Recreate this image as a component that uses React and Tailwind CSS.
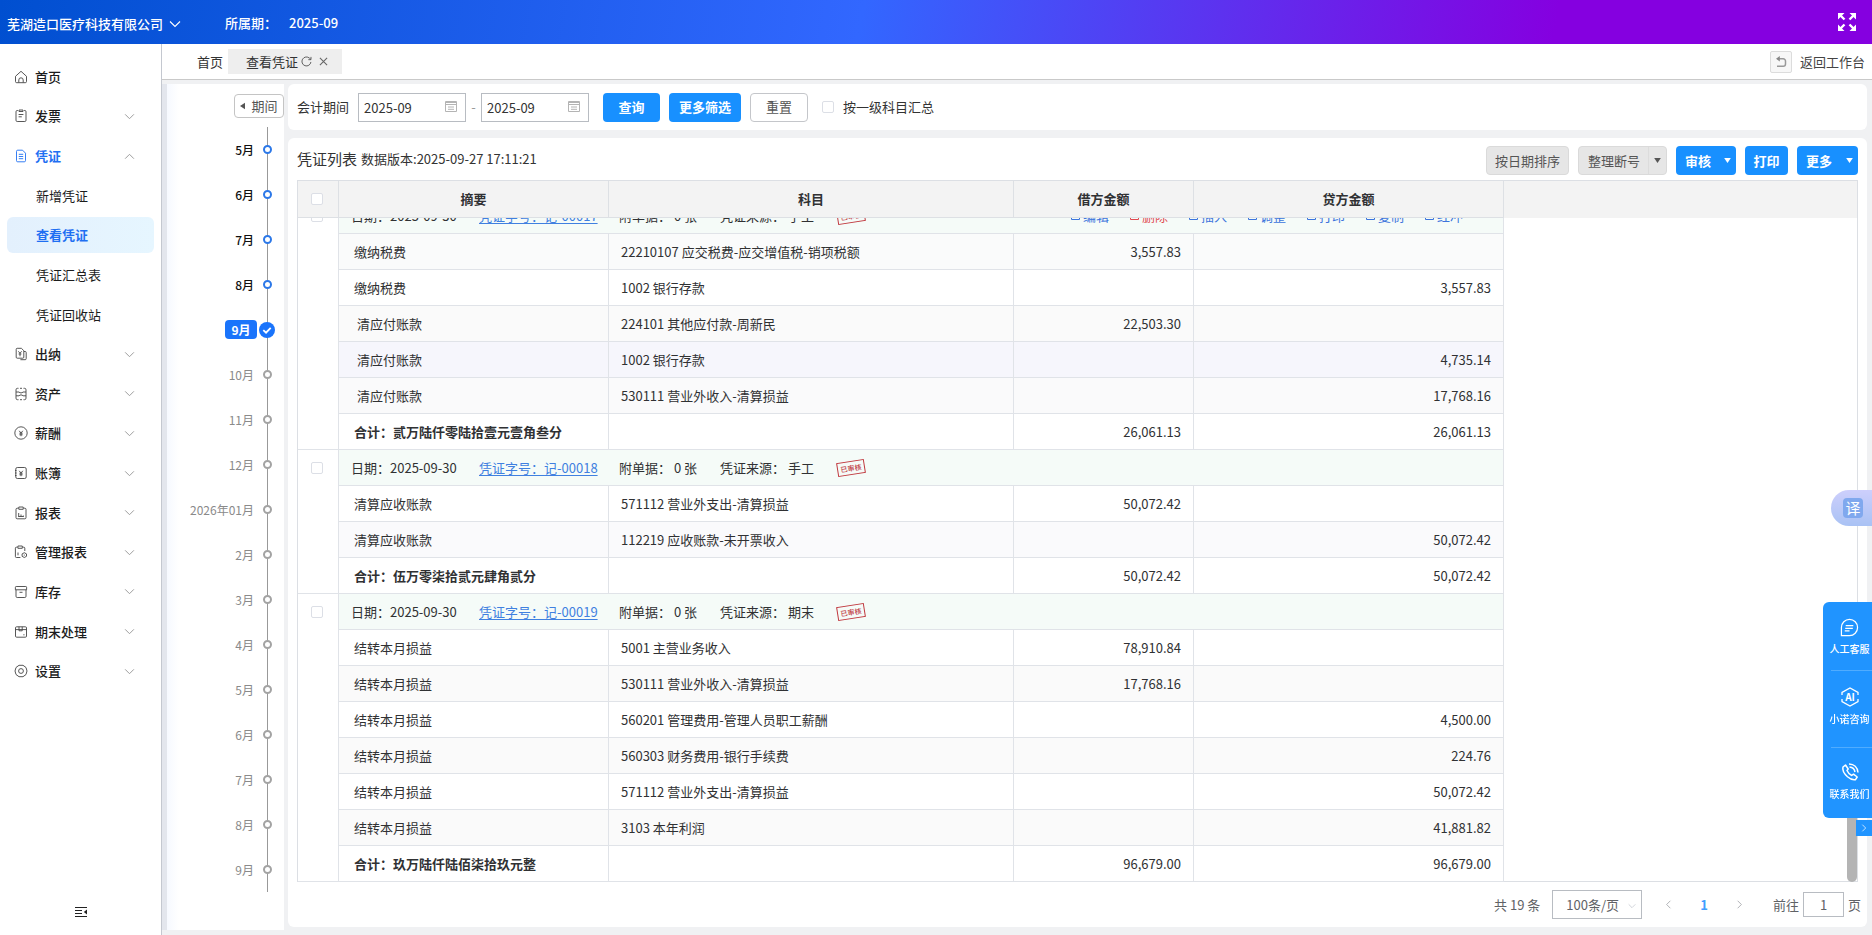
import { useState } from "react";
import clsx from "clsx";

const MENU = [
  { label: "首页", icon: "home" },
  { label: "发票", icon: "invoice", arrow: "down" },
  { label: "凭证", icon: "voucher", arrow: "up", active: true },
  { label: "新增凭证", sub: true },
  { label: "查看凭证", sub: true, active: true },
  { label: "凭证汇总表", sub: true },
  { label: "凭证回收站", sub: true },
  { label: "出纳", icon: "cashier", arrow: "down" },
  { label: "资产", icon: "asset", arrow: "down" },
  { label: "薪酬", icon: "salary", arrow: "down" },
  { label: "账簿", icon: "ledger", arrow: "down" },
  { label: "报表", icon: "report", arrow: "down" },
  { label: "管理报表", icon: "manage", arrow: "down" },
  { label: "库存", icon: "stock", arrow: "down" },
  { label: "期末处理", icon: "period", arrow: "down" },
  { label: "设置", icon: "setting", arrow: "down" },
];

const MONTHS = [
  { label: "5月", state: "done" },
  { label: "6月", state: "done" },
  { label: "7月", state: "done" },
  { label: "8月", state: "done" },
  { label: "9月", state: "current" },
  { label: "10月" },
  { label: "11月" },
  { label: "12月" },
  { label: "2026年01月" },
  { label: "2月" },
  { label: "3月" },
  { label: "4月" },
  { label: "5月" },
  { label: "6月" },
  { label: "7月" },
  { label: "8月" },
  { label: "9月" },
];

const VOUCHERS = [
  {
    no: "记-00017",
    source: "手工",
    actions: true,
    rows: [
      { summary: "缴纳税费", subject: "22210107 应交税费-应交增值税-销项税额", debit: "3,557.83", shade: "bg-[#fafbfb]" },
      { summary: "缴纳税费", subject: "1002 银行存款", credit: "3,557.83" },
      { summary: "清应付账款", indent: true, subject: "224101 其他应付款-周新民", debit: "22,503.30", shade: "bg-[#fafafa]" },
      { summary: "清应付账款", indent: true, subject: "1002 银行存款", credit: "4,735.14", shade: "bg-[#f6f6fc]" },
      { summary: "清应付账款", indent: true, subject: "530111 营业外收入-清算损益", credit: "17,768.16", shade: "bg-[#fafafb]" },
    ],
    total: "合计：贰万陆仟零陆拾壹元壹角叁分",
    amount: "26,061.13",
  },
  {
    no: "记-00018",
    source: "手工",
    rows: [
      { summary: "清算应收账款", subject: "571112 营业外支出-清算损益", debit: "50,072.42" },
      { summary: "清算应收账款", subject: "112219 应收账款-未开票收入", credit: "50,072.42", shade: "bg-[#fafafc]" },
    ],
    total: "合计：伍万零柒拾贰元肆角贰分",
    amount: "50,072.42",
  },
  {
    no: "记-00019",
    source: "期末",
    rows: [
      { summary: "结转本月损益", subject: "5001 主营业务收入", debit: "78,910.84" },
      { summary: "结转本月损益", subject: "530111 营业外收入-清算损益", debit: "17,768.16", shade: "bg-[#fafafa]" },
      { summary: "结转本月损益", subject: "560201 管理费用-管理人员职工薪酬", credit: "4,500.00" },
      { summary: "结转本月损益", subject: "560303 财务费用-银行手续费", credit: "224.76", shade: "bg-[#fafafa]" },
      { summary: "结转本月损益", subject: "571112 营业外支出-清算损益", credit: "50,072.42" },
      { summary: "结转本月损益", subject: "3103 本年利润", credit: "41,881.82", shade: "bg-[#fafafa]" },
    ],
    total: "合计：玖万陆仟陆佰柒拾玖元整",
    amount: "96,679.00",
  },
];

const ACTIONS = ["编辑", "删除", "插入", "调整", "打印", "复制", "红冲"];

const YEN = "M5.2 4.8 7 7l1.8-2.2M7 7v3.2M5.4 7.2h3.2M5.4 8.8h3.2";

const ICON_PATHS = {
  home: "M1.5 6.3 7 1.3l5.5 5v5.2a1.2 1.2 0 0 1-1.2 1.2H2.7a1.2 1.2 0 0 1-1.2-1.2zM4.8 12.5V10a2.2 2.2 0 0 1 4.4 0v2.5",
  invoice: "M4 1.5H3.2A1.2 1.2 0 0 0 2 2.7v8.6a1.2 1.2 0 0 0 1.2 1.2h7.6a1.2 1.2 0 0 0 1.2-1.2V2.7a1.2 1.2 0 0 0-1.2-1.2H10M5 1h4v1.5H5zM4.6 5.5h4.8M4.6 7.8h3.2",
  voucher: "M8.6 1.2H3.7a1.2 1.2 0 0 0-1.2 1.2v9.2a1.2 1.2 0 0 0 1.2 1.2h6.6a1.2 1.2 0 0 0 1.2-1.2V4.2zM4.8 5.3h4.4M4.8 7.5h4.4M4.8 9.7h4.4",
  cashier: "M7.4 1.3H3.2a1 1 0 0 0-1 1v7.9a1 1 0 0 0 1 1h5.6a1 1 0 0 0 1-1V3.7zM10 4.5h1.2a1 1 0 0 1 1 1v6.2a1 1 0 0 1-1 1H6.4M4.4 4.3 6 6.3l1.6-2M6 6.3v3M4.6 7h2.8",
  asset: "M4.5 1.3h-1A1.5 1.5 0 0 0 2 2.8v8.4a1.5 1.5 0 0 0 1.5 1.5h1M6 1.3h2M6 12.7h2M9.5 1.3h1A1.5 1.5 0 0 1 12 2.800v8.400a1.500 1.500 0 0 1-1.500 1.500h-1M2 5h3l1 .8h2L9 5h3M2 8.800h3l1-.8h2l1 .8h3",
  salary: "M7 .8a6.2 6.2 0 1 0 0 12.4A6.2 6.2 0 0 0 7 .8z" + YEN,
  ledger: "M3.3 1.5h7.4A1.5 1.5 0 0 1 12.2 3v8a1.5 1.5 0 0 1-1.5 1.5H3.3A1.5 1.5 0 0 1 1.8 11V3a1.5 1.5 0 0 1 1.5-1.5zM1 4.5h1.5M1 7h1.5M1 9.5h1.5" + YEN,
  report: "M4.5 2.2H3.2A1.2 1.2 0 0 0 2 3.4v8.2a1.2 1.2 0 0 0 1.2 1.2h7.6a1.2 1.2 0 0 0 1.2-1.2V3.4a1.2 1.2 0 0 0-1.2-1.2H9.5M4.800 1h4.400v2.300H4.800zM4.700 10.500V7M7 10.500v-2M9.300 10.500v-1M4.200 10.500h5.600",
  manage: "M3.5 2.2H2.4a1 1 0 0 0-1 1v8.3a1 1 0 0 0 1 1h4M10.8 6V3.2a1 1 0 0 0-1-1h-1M3.9 1h4.4v2.3H3.9zM4 10.3V7.5M10.3 7.7l2.2 1.2v2.4l-2.2 1.2-2.2-1.2V8.9zM10.3 9.6v1",
  stock: "M2.2 1.5h9.6a.8.8 0 0 1 .8.8v2.500H1.400V2.300a.8.8 0 0 1 .8-.8zM2 4.800v6.500a1.200 1.200 0 0 0 1.200 1.200h7.600a1.200 1.200 0 0 0 1.200-1.200V4.800M5.500 7.300h3",
  period: "M2.6 1.8h8.8a1.1 1.1 0 0 1 1.1 1.1v8.2a1.1 1.1 0 0 1-1.1 1.1H2.6a1.1 1.1 0 0 1-1.1-1.1V2.9a1.1 1.1 0 0 1 1.1-1.1zM1.5 4.6h11M5 1.8v4h3.2v-4M9.3 9.8h1.2",
  setting: "M5 1.3h4L12 3.5 13 7l-1 3.5-3 2.2H5L2 10.5 1 7l1-3.5zM7 4.6a2.4 2.4 0 1 0 0 4.8 2.4 2.4 0 0 0 0-4.8z",
};

function MenuIcon({ name }) {
  return (
    <svg viewBox="0 0 14 14" className="h-[14px] w-[14px] shrink-0" fill="none" stroke="currentColor" strokeWidth="0.9" strokeLinejoin="round">
      <path d={ICON_PATHS[name]} />
    </svg>
  );
}

function Chevron({ className }) {
  return (
    <svg viewBox="0 0 12 8" className={className} fill="none" stroke="currentColor" strokeWidth="1.1">
      <path d="M1 1.5 6 6.5l5-5" />
    </svg>
  );
}

function Triangle() {
  return (
    <svg viewBox="0 0 8 6" className="h-[5px] w-[7px]" fill="currentColor">
      <path d="M0 0h8L4 6z" />
    </svg>
  );
}

function TopBar() {
  return (
    <header className="flex h-11 shrink-0 items-center bg-[linear-gradient(100deg,#004fd0_0%,#3267ff_46%,#8500e0_83%,#8500e0_100%)] pl-[7px] pr-4 text-[13px] font-medium text-white">
      <button className="flex items-center gap-[6px] pt-1">
        芜湖造口医疗科技有限公司
        <Chevron className="h-2 w-3" />
      </button>
      <span className="ml-11 pt-[2px]">所属期：</span>
      <span className="ml-3 pt-[2px]">2025-09</span>
      <button aria-label="全屏" className="ml-auto">
        <svg viewBox="0 0 18 18" className="h-[18px] w-[18px]" fill="none" stroke="white" strokeWidth="2.4">
          <path d="M2 2l4.5 4.5M16 2l-4.5 4.5M2 16l4.5-4.5M16 16l-4.5-4.5" />
          <path d="M0 0h6.500L0 6.500zM18 0h-6.500L18 6.500zM0 18h6.500L0 11.500zM18 18h-6.500l6.500-6.500z" fill="white" stroke="none" />
        </svg>
      </button>
    </header>
  );
}

function Sidebar() {
  return (
    <aside className="flex w-[162px] shrink-0 flex-col border-r border-[#c4c8d0] bg-white pt-[13px]">
      <nav className="flex h-[634px] flex-col">
        {MENU.map((item) =>
          item.sub ? (
            <a key={item.label} href="#" className="flex min-h-0 flex-1 items-center px-[7px] text-[13px]">
              <span
                className={clsx(
                  "flex h-9 flex-1 items-center rounded-md pl-[29px]",
                  item.active
                    ? "bg-linear-to-r from-[#e3f0fd] to-[#e6f6ff] font-bold text-[#1f6ff2]"
                    : "text-[#1c1c1c]"
                )}
              >
                {item.label}
              </span>
            </a>
          ) : (
            <a
              key={item.label}
              href="#"
              className={clsx(
                "flex min-h-0 flex-1 items-center pl-[14px] pr-[26px] text-[13px]",
                item.active ? "font-bold text-[#1f6ff2]" : "font-medium text-[#1c1c1c]"
              )}
            >
              <span className={clsx("mr-[7px]", item.active ? "text-[#1f6ff2]" : "text-[#444]")}>
                <MenuIcon name={item.icon} />
              </span>
              {item.label}
              {item.arrow && (
                <Chevron className={clsx("ml-auto h-[7px] w-[11px] text-[#999]", item.arrow === "up" && "rotate-180")} />
              )}
            </a>
          )
        )}
      </nav>
      <button aria-label="收起菜单" className="mx-auto mb-[17px] mt-auto text-[#222]">
        <svg viewBox="0 0 12 12" className="h-3 w-3" fill="none" stroke="currentColor" strokeWidth="1.2">
          <path d="M0 1.5h12M0 4.5h7M0 7.5h7M0 10.5h12" />
          <path d="M12 3.5v5L8.8 6z" fill="currentColor" stroke="none" />
        </svg>
      </button>
    </aside>
  );
}

function TabBar() {
  return (
    <div className="flex h-9 shrink-0 items-center border-b border-[#c9c9c9] bg-white pl-[35px] pr-[7px] text-[13px] text-[#333]">
      <a href="#" className="pr-[5px]">首页</a>
      <div className="flex h-[25px] items-center bg-[#eeeeee] pl-[18px] pr-[14px]">
        <span>查看凭证</span>
        <button aria-label="刷新" className="ml-[3px]">
          <svg viewBox="0 0 12 12" className="h-[11px] w-[11px]" fill="none" stroke="#555" strokeWidth="1">
            <path d="M10.8 6.5A4.9 4.9 0 1 1 9.3 2.400L10.800 3.800M10.900 1v3H8" />
          </svg>
        </button>
        <button aria-label="关闭" className="ml-[7px]">
          <svg viewBox="0 0 10 10" className="h-[9px] w-[9px]" fill="none" stroke="#666" strokeWidth="1.2">
            <path d="M1 1l8 8M9 1 1 9" />
          </svg>
        </button>
      </div>
      <button className="ml-auto flex items-center gap-2 text-[#444]">
        <span className="flex h-[22px] w-[22px] items-center justify-center rounded-xs border border-[#dcdcdc] bg-[#f7f7f7]">
          <svg viewBox="0 0 12 12" className="h-3 w-3" fill="none" stroke="#999" strokeWidth="1.5">
            <path d="M2.500 2.800h5.700a2.300 2.300 0 0 1 2.300 2.300v2.800a2.300 2.300 0 0 1-2.300 2.300H2" />
            <path d="M4.800 0v5.600L1 2.800z" fill="#888" stroke="none" />
          </svg>
        </span>
        返回工作台
      </button>
    </div>
  );
}

function Timeline() {
  return (
    <section className="mb-[5px] flex w-[122px] shrink-0 flex-col border-l-[5px] border-[#e3e6ed] bg-linear-to-r from-[#f6f9ff] to-white to-[12px]">
      <button className="ml-auto mt-[10px] flex h-6 w-[50px] shrink-0 items-center justify-center gap-[6px] rounded-sm border border-[#c4c4c4] bg-white text-[13px] text-[#555]">
        <svg viewBox="0 0 6 8" className="h-2 w-[5px]" fill="currentColor">
          <path d="M6 0v8L0 4z" />
        </svg>
        期间
      </button>
      <ol className="relative mt-[9px]">
        <li aria-hidden="true" className="absolute bottom-0 right-4 top-0 w-px bg-[#999]" />
        {MONTHS.map((month, index) => (
          <li key={index} className="relative flex h-[45px] items-center justify-end pr-3 text-xs">
            {month.state === "current" ? (
              <>
                <span className="mr-[2px] flex h-[19px] w-8 items-center justify-center rounded-sm bg-[#1a74fb] font-bold text-white">
                  {month.label}
                </span>
                <svg viewBox="0 0 16 16" className="-mr-[3px] h-4 w-4">
                  <circle cx="8" cy="8" r="8" fill="#1a74fb" />
                  <path d="M4.3 8.2 7 10.7l4.7-4.9" fill="none" stroke="white" strokeWidth="1.8" />
                </svg>
              </>
            ) : (
              <>
                <span className={clsx("mr-[9px]", month.state === "done" ? "font-medium text-[#111]" : "text-[#8a8a8a]")}>
                  {month.label}
                </span>
                <span
                  className={clsx(
                    "h-[9px] w-[9px] rounded-full border-2 bg-white",
                    month.state === "done" ? "border-[#2c78e8]" : "border-[#a3a3a3]"
                  )}
                />
              </>
            )}
          </li>
        ))}
      </ol>
    </section>
  );
}

function MonthInput({ label }) {
  const [value, setValue] = useState("2025-09");
  return (
    <span className="relative flex">
      <input
        aria-label={label}
        value={value}
        onChange={(e) => setValue(e.target.value)}
        className="h-[29px] w-[108px] border border-[#b8bcc2] bg-white pl-[5px] text-[13px] text-[#333]"
      />
      <svg viewBox="0 0 12 12" className="absolute right-[9px] top-[7px] h-3 w-3" fill="none" stroke="#b4b4b4" strokeWidth="1">
        <path d="M.5 1.5h11v10H.5zM.5 4.5h11M.5 2.5h11M3 7h6M3 9.3h6" />
      </svg>
    </span>
  );
}

function FilterBar() {
  return (
    <section className="flex h-[46px] shrink-0 items-center rounded-md bg-white px-[9px] text-[13px] text-[#333]">
      <span>会计期间</span>
      <span className="ml-[9px] flex items-center">
        <MonthInput label="会计期间起" />
        <span className="w-[15px] text-center text-[#999]">-</span>
        <MonthInput label="会计期间止" />
      </span>
      <button className="ml-[14px] h-[29px] w-[57px] rounded-sm bg-[#1890ff] font-bold text-white">查询</button>
      <button className="ml-[9px] h-[29px] w-[72px] rounded-sm bg-[#1890ff] font-bold text-white">更多筛选</button>
      <button className="ml-[9px] h-[29px] w-[58px] rounded-sm border border-[#c4c6ca] bg-white text-[#555]">重置</button>
      <label className="ml-[14px] flex items-center gap-[9px]">
        <input type="checkbox" className="h-3 w-3 appearance-none rounded-xs border border-[#dcdfe6] bg-white" />
        按一级科目汇总
      </label>
    </section>
  );
}

function Toolbar() {
  return (
    <div className="flex h-[42px] shrink-0 items-center text-[13px]">
      <h2 className="text-[15px] text-[#333]">凭证列表</h2>
      <span className="ml-1 text-[#333]">数据版本:2025-09-27 17:11:21</span>
      <div className="ml-auto flex items-center gap-[9px] pt-[3px]">
        <button className="h-[29px] w-[83px] rounded-sm border border-[#dadada] bg-[#e6e6e6] text-[#555]">按日期排序</button>
        <button className="flex h-[29px] w-[89px] items-center rounded-sm border border-[#dadada] bg-[#e6e6e6] pl-[9px] text-[#555]">
          整理断号
          <span className="ml-auto flex h-full w-[18px] items-center justify-center border-l border-[#dcdcdc]">
            <Triangle />
          </span>
        </button>
        <button className="flex h-[29px] w-[60px] items-center justify-between rounded-sm bg-[#1890ff] pl-[9px] pr-[5px] font-bold text-white">
          审核
          <Triangle />
        </button>
        <button className="h-[29px] w-[43px] rounded-sm bg-[#1890ff] font-bold text-white">打印</button>
        <button className="flex h-[29px] w-[61px] items-center justify-between rounded-sm bg-[#1890ff] pl-[9px] pr-[5px] font-bold text-white">
          更多
          <Triangle />
        </button>
      </div>
    </div>
  );
}

function Columns() {
  return (
    <colgroup>
      <col className="w-[41px]" />
      <col className="w-[270px]" />
      <col className="w-[405px]" />
      <col className="w-[180px]" />
      <col className="w-[310px]" />
    </colgroup>
  );
}

function CheckBox({ label }) {
  return (
    <input
      type="checkbox"
      aria-label={label}
      className="block h-3 w-3 appearance-none rounded-xs border border-[#dcdfe6] bg-white"
    />
  );
}

function VoucherGroup({ voucher }) {
  const cell = "border-b border-r border-[#e0e3e8]";
  return (
    <tbody>
      <tr className="h-9">
        <td rowSpan={voucher.rows.length + 2} className={clsx(cell, "bg-white pl-[13px] pt-3 align-top")}>
          <CheckBox label={voucher.no} />
        </td>
        <td colSpan={4} className={clsx(cell, "bg-[#f5fbf8] pl-3")}>
          <div className="flex items-center">
            <span className="w-[128px]">日期：2025-09-30</span>
            <a href="#" className="w-[140px] text-[#4080e0] underline underline-offset-2">凭证字号：{voucher.no}</a>
            <span className="w-[101px]">附单据： 0 张</span>
            <span className="w-[117px]">凭证来源： {voucher.source}</span>
            <span className="flex h-[14px] w-[28px] -rotate-9 items-center justify-center border border-[#c0393f] text-[7px] font-medium text-[#c0393f]">
              已审核
            </span>
            {voucher.actions && (
              <span className="ml-auto mr-[40px] flex gap-[20px]">
                {ACTIONS.map((action) => (
                  <a
                    key={action}
                    href="#"
                    className={clsx("flex items-center gap-[2px]", action === "删除" ? "text-[#e0484f]" : "text-[#3c74dc]")}
                  >
                    <svg viewBox="0 0 11 11" className="h-[11px] w-[11px]" fill="none" stroke="currentColor">
                      <path d="M1.5 1.5h8v8h-8zM3.5 4.5h4" />
                    </svg>
                    {action}
                  </a>
                ))}
              </span>
            )}
          </div>
        </td>
      </tr>
      {voucher.rows.map((row, index) => (
        <tr key={index} className={clsx("h-9", row.shade)}>
          <td className={clsx(cell, row.indent ? "pl-[18px]" : "pl-[15px]")}>{row.summary}</td>
          <td className={clsx(cell, "pl-3")}>{row.subject}</td>
          <td className={clsx(cell, "pr-3 text-right")}>{row.debit}</td>
          <td className={clsx(cell, "pr-3 text-right")}>{row.credit}</td>
        </tr>
      ))}
      <tr className="h-9">
        <td className={clsx(cell, "pl-[15px] font-bold")}>{voucher.total}</td>
        <td className={cell} />
        <td className={clsx(cell, "pr-3 text-right")}>{voucher.amount}</td>
        <td className={clsx(cell, "pr-3 text-right")}>{voucher.amount}</td>
      </tr>
    </tbody>
  );
}

function VoucherTable() {
  return (
    <div className="flex min-h-0 flex-1 flex-col border-l border-r border-t border-[#dcdfe4] text-[13px] text-[#303133]">
      <div className="shrink-0 bg-[#f3f3f3]">
        <table className="w-[1206px] table-fixed border-separate border-spacing-0">
          <Columns />
          <thead>
            <tr className="h-[37px] [&>th]:border-b [&>th]:border-r [&>th]:border-[#dde0e4]">
              <th className="pl-[13px]">
                <CheckBox label="全选" />
              </th>
              <th>摘要</th>
              <th>科目</th>
              <th>借方金额</th>
              <th>贷方金额</th>
            </tr>
          </thead>
        </table>
      </div>
      {/* the list is kept scrolled to its end */}
      <div className="relative flex min-h-0 flex-1 flex-col justify-end overflow-hidden shadow-[inset_0_-1px_0_#dcdfe4]">
        <table className="w-[1206px] table-fixed border-separate border-spacing-0">
          <Columns />
          {VOUCHERS.map((voucher) => (
            <VoucherGroup key={voucher.no} voucher={voucher} />
          ))}
        </table>
        <div className="absolute bottom-0 right-0 h-40 w-[10px] rounded-full bg-[#b4b4b4]" />
      </div>
    </div>
  );
}

function Pagination() {
  return (
    <div className="-mr-[3px] flex h-[45px] shrink-0 items-center justify-end text-[13px] text-[#606266]">
      <span>共 19 条</span>
      <span className="relative ml-3 flex">
        <select aria-label="每页条数" className="h-[29px] w-[90px] appearance-none border border-[#b8bcc2] bg-white pl-[13px]">
          <option>100条/页</option>
        </select>
        <Chevron className="pointer-events-none absolute right-[6px] top-[13px] h-[6px] w-2 text-[#c0c4cc]" />
      </span>
      <button aria-label="上一页" className="ml-[22px] text-[#a0a3a8]">
        <Chevron className="h-[7px] w-[9px] rotate-90" />
      </button>
      <button className="mx-[27px] font-bold text-[#409eff]">1</button>
      <button aria-label="下一页" className="mr-[29px] text-[#a0a3a8]">
        <Chevron className="h-[7px] w-[9px] -rotate-90" />
      </button>
      <label className="flex items-center gap-1">
        前往
        <input defaultValue="1" className="h-[25px] w-[41px] border border-[#b8bcc2] bg-white text-center" />
        页
      </label>
    </div>
  );
}

function HelpDock() {
  return (
    <div className="fixed right-0 top-[490px] flex flex-col items-end">
      <button className="flex h-9 w-[41px] items-center rounded-l-full bg-linear-to-b from-[#cdcffc] to-[#a9c2f4] pl-3">
        <span className="flex h-5 w-5 items-center justify-center rounded-sm bg-[#80a8ee] text-[15px] text-white">译</span>
      </button>
      <div className="mt-[76px] flex w-[49px] flex-col whitespace-nowrap rounded-l-md bg-[#2094ff] text-[10px] font-medium text-white">
        <button className="ml-2 flex h-[69px] flex-col items-center justify-center border-b border-[#50acff] pr-1 pt-1">
          <svg viewBox="0 0 20 20" className="h-[19px] w-[19px]" fill="none" stroke="currentColor" strokeWidth="1.3">
            <path d="M10 1.5A8.5 8.5 0 1 1 10 18.5H1.500V10A8.500 8.500 0 0 1 10 1.500zM6 8h8M5.500 10.800h8M5 13.500h5" />
          </svg>
          <span className="mt-[2px]">人工客服</span>
        </button>
        <button className="ml-2 flex h-[77px] flex-col items-center justify-center border-b border-[#50acff] pr-1 pb-1 pt-[2px]">
          <svg viewBox="0 0 20 20" className="h-5 w-5" fill="none" stroke="currentColor" strokeWidth="1.3">
            <path d="M2 8V5.500L10 1l8 4.500V8M18 12v2.500L10 19l-8-4.500V12" />
            <text x="10" y="13.5" textAnchor="middle" fontSize="10" fontWeight="700" fill="currentColor" stroke="none">AI</text>
          </svg>
          <span className="mt-[2px]">小诺咨询</span>
        </button>
        <button className="ml-2 flex h-[70px] flex-col items-center justify-center pr-1">
          <svg viewBox="0 0 20 20" className="h-5 w-5" fill="none" stroke="currentColor" strokeWidth="1.5" strokeLinejoin="round">
            <path d="M5.5 3 3 5c-.8 3 1.5 7 4.5 9.7 2.6 2.2 5.7 3.6 8 3l1.7-2.7-3.7-2.8-1.8 1.3C9.5 12.5 8 10.7 7 8.5L8.200 7z" />
            <path d="M9 2c5 0 8.500 3.500 9 8.500M9.500 5c3 .2 5 2.200 5.500 5" />
          </svg>
          <span className="mt-[2px]">联系我们</span>
        </button>
      </div>
      <button aria-label="收起" className="mt-[2px] flex h-4 w-4 items-center justify-center bg-[#2094ff] text-white">
        <Chevron className="h-[6px] w-2 -rotate-90" />
      </button>
    </div>
  );
}

export default function App() {
  return (
    <div className="flex h-screen flex-col bg-[#f0f1f3] font-['Noto_Sans_CJK_SC',sans-serif] leading-5">
      <TopBar />
      <div className="flex min-h-0 flex-1">
        <Sidebar />
        <main className="flex min-w-0 flex-1 flex-col">
          <TabBar />
          <div className="flex min-h-0 flex-1 gap-1 pt-1">
            <Timeline />
            <div className="mb-2 mr-[5px] flex min-w-0 flex-1 flex-col gap-2">
              <FilterBar />
              <section className="flex min-h-0 flex-1 flex-col rounded-md bg-white px-[9px]">
                <Toolbar />
                <VoucherTable />
                <Pagination />
              </section>
            </div>
          </div>
        </main>
      </div>
      <HelpDock />
    </div>
  );
}
